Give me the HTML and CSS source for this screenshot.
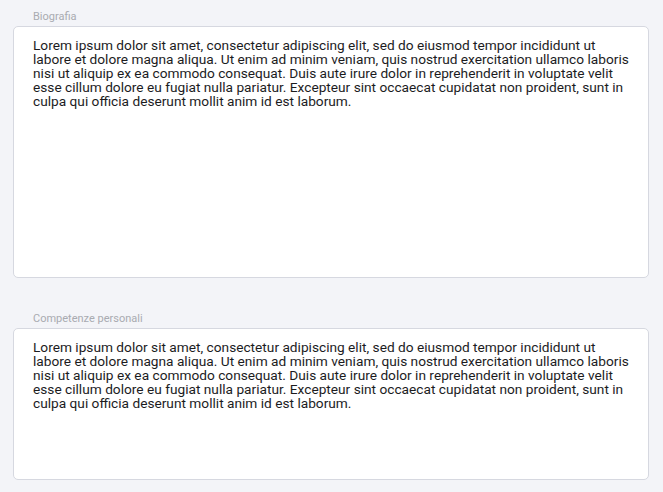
FILE: index.html
```html
<!DOCTYPE html>
<html lang="it">
<head>
<meta charset="UTF-8">
<meta name="viewport" content="width=device-width, initial-scale=1">
<title>Profilo</title>
<link rel="stylesheet" href="styles.css">
</head>
<body>
<div class="container">
  <!-- Biografia -->
  <div class="field">
    <label class="field-label">Biografia</label>
    <div class="field-box tall">Lorem ipsum dolor sit amet, consectetur adipiscing elit, sed do eiusmod tempor incididunt ut labore et dolore magna aliqua. Ut enim ad minim veniam, quis nostrud exercitation ullamco laboris nisi ut aliquip ex ea commodo consequat. Duis aute irure dolor in reprehenderit in voluptate velit esse cillum dolore eu fugiat nulla pariatur. Excepteur sint occaecat cupidatat non proident, sunt in culpa qui officia deserunt mollit anim id est laborum.</div>
  </div>

  <!-- Competenze personali -->
  <div class="field">
    <label class="field-label">Competenze personali</label>
    <div class="field-box short">Lorem ipsum dolor sit amet, consectetur adipiscing elit, sed do eiusmod tempor incididunt ut labore et dolore magna aliqua. Ut enim ad minim veniam, quis nostrud exercitation ullamco laboris nisi ut aliquip ex ea commodo consequat. Duis aute irure dolor in reprehenderit in voluptate velit esse cillum dolore eu fugiat nulla pariatur. Excepteur sint occaecat cupidatat non proident, sunt in culpa qui officia deserunt mollit anim id est laborum.</div>
  </div>
</div>
</body>
</html>
```

FILE: styles.css
```css
body {
  font-family: 'Roboto', sans-serif;
  background: #f3f4f8;
  margin: 0;
  padding: 0;
}
.container {
  padding: 10px 14px 12px 13px;
}
.field + .field {
  margin-top: 34px;
}
.field-label {
  display: block;
  font-size: 11px;
  line-height: 14px;
  color: #a9abb1;
  margin: 0 0 2px 20px;
}
.field-box {
  box-sizing: border-box;
  background: white;
  border: 1px solid #d6d8e0;
  border-radius: 5px;
  padding: 11px 15px 11px 19px;
  font-size: 13.7px;
  line-height: 14px;
  color: #1c1c1e;
}
.field-box.tall {
  height: 252px;
}
.field-box.short {
  height: 152px;
}
```
